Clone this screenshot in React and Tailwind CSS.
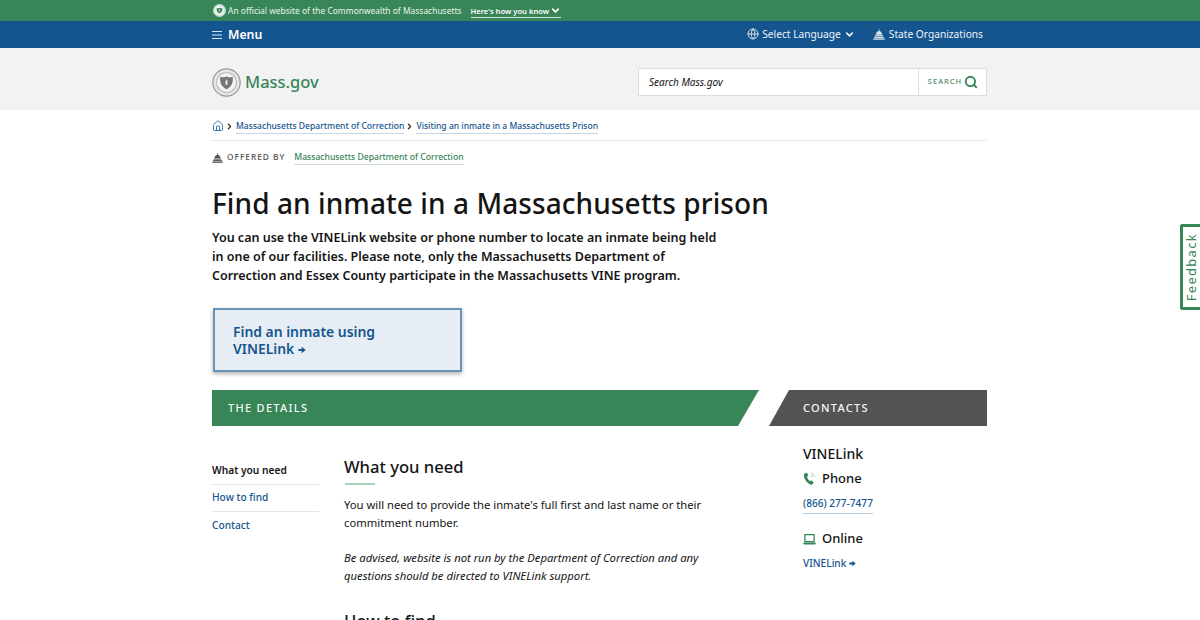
import React from 'react';
import { ChevronDown, Globe, Search, House, ChevronRight } from 'lucide-react';

// capitol building icon used for "State Organizations" and "Offered by"
function Capitol({ className }) {
  return (
    <svg viewBox="0 0 16 14" className={className} fill="currentColor">
      <rect x="7.4" y="0" width="1.2" height="2" />
      <path d="M3.6 7.2C4 4.2 6 2.2 8 2.2s4 2 4.4 5z" />
      <rect x="2.6" y="7.8" width="10.8" height="1.6" />
      <rect x="1.6" y="10" width="12.8" height="1.6" />
      <rect x="0.4" y="12.2" width="15.2" height="1.8" />
    </svg>
  );
}

function Seal({ className, ring = '#9a9a9a', fill = '#e8e8e8', shield = '#757575' }) {
  return (
    <svg viewBox="0 0 28 28" className={className}>
      <circle cx="14" cy="14" r="13.2" fill={fill} stroke={ring} strokeWidth="1.2" />
      <circle cx="14" cy="14" r="9.6" fill="#f3f3f3" stroke={ring} strokeWidth="1.4" strokeDasharray="1 1" />
      <path d="M8 8.5c2.4.8 4 .8 6-.6 2 1.4 3.6 1.4 6 .6 .6 6-1 9.6-6 12-5-2.4-6.6-6-6-12z" fill={shield} />
      <path d="M14 10.5l.9 2.4v3.2h-1.8v-3.2z" fill="#f3f3f3" />
    </svg>
  );
}

function SmallArrow({ className }) {
  return (
    <svg viewBox="0 0 10 10" className={className} fill="currentColor">
      <path d="M0.5 3.6h4.2V1L9.6 5 4.7 9V6.4H0.5z" />
    </svg>
  );
}

function PhoneWaves({ className }) {
  return (
    <svg viewBox="0 0 14 15" className={className}>
      <path d="M2.2 1.2L4.4.8l1.3 3-1.4 1.3c.5 2 1.6 3.6 3.3 4.8l1.6-1 2.3 2.5-1.4 1.8c-.6.6-1.4.7-2.2.3C4 11.6 1.6 8 .9 3.6c-.1-1 .3-2 1.3-2.4z" fill="#388557" />
      <path d="M8.5 3.8c.9.2 1.5.8 1.7 1.7M8.8 1.5c1.9.3 3.2 1.6 3.6 3.5" fill="none" stroke="#8dbaa0" strokeWidth="0.9" />
    </svg>
  );
}

function LaptopIcon({ className }) {
  return (
    <svg viewBox="0 0 14 12" className={className}>
      <rect x="2" y="0.7" width="10" height="7.6" fill="none" stroke="#388557" strokeWidth="1.4" />
      <path d="M0.3 9.2h13.4v1.4c0 .5-.4.9-.9.9H1.2c-.5 0-.9-.4-.9-.9z" fill="#388557" />
    </svg>
  );
}

function TopBanner() {
  return (
    <div className="h-[21px] bg-[#388557] text-white">
      <div className="w-[775px] ml-[212px] h-full flex items-center">
        <Seal className="w-[13px] h-[13px] ml-[1px] mr-[2px]" ring="#dfeee5" fill="#cfe3d7" shield="#388557" />
        <span className="text-[8.45px] leading-none text-[#eaf3ed] mt-[1px]">An official website of the Commonwealth of Massachusetts</span>
        <span className="ml-[9px] mt-[1px] flex items-center text-[7.6px] font-semibold leading-[12px] border-b border-[#cfe6d8]">
          Here's how you know
          <ChevronDown className="w-[11px] h-[11px] ml-[1px]" strokeWidth={3.5} />
        </span>
      </div>
    </div>
  );
}

function NavBar() {
  return (
    <div className="h-[27px] bg-[#14558f] text-white">
      <div className="w-[775px] ml-[212px] h-full flex items-center justify-between">
        <div className="flex items-center">
          <svg viewBox="0 0 10 8" className="w-[10px] h-[8px] text-[#d9e6f2]" stroke="currentColor" strokeWidth="1">
            <path d="M0 .5h10M0 4h10M0 7.5h10" />
          </svg>
          <span className="ml-[6px] mt-[1px] text-[12.3px] font-semibold">Menu</span>
        </div>
        <div className="flex items-center text-[10.2px] text-[#eef3f8] mr-[4px]">
          <Globe className="w-[12px] h-[12px] text-[#d5e1ec]" strokeWidth={2} />
          <span className="ml-[3px]">Select Language</span>
          <ChevronDown className="w-[11px] h-[11px] ml-[3px]" strokeWidth={3.5} />
          <Capitol className="w-[12px] h-[11px] ml-[18px] text-[#d5e1ec]" />
          <span className="ml-[4px]">State Organizations</span>
        </div>
      </div>
    </div>
  );
}

function SiteHeader() {
  return (
    <div className="h-[62px] bg-[#f2f2f2] pt-[6px]">
      <div className="w-[775px] ml-[212px] h-full flex items-center justify-between">
        <div className="flex items-center">
          <Seal className="w-[29px] h-[29px]" />
          <span className="ml-[4px] text-[16.5px] font-medium text-[#388557]">Mass.gov</span>
        </div>
        <div className="flex w-[349px] h-[28px] border border-[#dcdcdc] bg-white">
          <div className="flex-1 flex items-center pl-[10px] text-[10px] italic text-[#141414]">Search Mass.gov</div>
          <div className="w-[68px] border-l border-[#dcdcdc] flex items-center justify-center pl-[1px] text-[#388557]">
            <span className="text-[7.5px] font-medium tracking-[1px] text-[#4f8b69]">SEARCH</span>
            <Search className="w-[14px] h-[14px] ml-[2px]" strokeWidth={3.2} />
          </div>
        </div>
      </div>
    </div>
  );
}

function Crumbs() {
  return (
    <div className="h-[31px] pt-[7px] flex items-start border-b border-[#e5e5e5] text-[8.55px] font-medium text-[#14558f]">
      <House className="w-[12px] h-[12px] mt-[3px]" strokeWidth={1.6} />
      <ChevronRight className="w-[9px] h-[9px] mt-[4.5px] ml-[1px] text-[#333]" strokeWidth={3.5} />
      <span className="ml-[2px] leading-[14px] mt-[2px] border-b border-[#c5d5e4]">Massachusetts Department of Correction</span>
      <ChevronRight className="w-[9px] h-[9px] mt-[4.5px] ml-[1px] text-[#333]" strokeWidth={3.5} />
      <span className="ml-[2px] leading-[14px] mt-[2px] border-b border-[#c5d5e4]">Visiting an inmate in a Massachusetts Prison</span>
    </div>
  );
}

function Hero() {
  return (
    <div>
      <div className="flex items-center h-[32px] pt-[1px]">
        <Capitol className="w-[11px] h-[10px] text-[#535353]" />
        <span className="ml-[4px] text-[8.3px] font-medium tracking-[1px] text-[#535353]">OFFERED BY</span>
        <span className="ml-[9px] text-[8.6px] font-medium text-[#388557] leading-[13px] border-b border-[#cde0d5]">Massachusetts Department of Correction</span>
      </div>
      <h1 className="mt-[10px] text-[28px] leading-[40px] font-medium text-[#141414] tracking-[0.08px]">Find an inmate in a Massachusetts prison</h1>
      <p className="mt-[5px] w-[515px] text-[12.5px] leading-[19px] font-semibold text-[#141414]">
        You can use the VINELink website or phone number to locate an inmate being held in one of our facilities. Please note, only the Massachusetts Department of Correction and Essex County participate in the Massachusetts VINE program.
      </p>
      <div className="mt-[23px] w-[249px] h-[64px] ml-[1px] border-2 border-[#6b93b8] bg-[#e7edf4] shadow-[0_2px_4px_rgba(0,0,0,0.3)] pl-[18px] pt-[13px] text-[13.9px] leading-[17px] font-semibold text-[#14558f]">
        Find an inmate using<br />
        VINELink <SmallArrow className="inline w-[8px] h-[8px] align-[0px]" />
      </div>
    </div>
  );
}

function Bands() {
  return (
    <div className="mt-[18px] flex h-[36px] text-[11px] font-medium tracking-[1.3px] text-[#f4f8f5]">
      <div className="w-[547px] bg-[#388557] flex items-center pl-[16px] pt-[1px] [clip-path:polygon(0_0,100%_0,526px_100%,0_100%)]">THE DETAILS</div>
      <div className="ml-[10px] w-[218px] bg-[#535353] flex items-center pl-[34px] pt-[1px] [clip-path:polygon(20px_0,100%_0,100%_100%,0_100%)]">CONTACTS</div>
    </div>
  );
}

function Details() {
  return (
    <div className="flex">
      <div className="w-[107px] pt-[30px] text-[10.2px] font-medium">
        <div className="h-[29px] leading-[29px] border-b border-[#e5e5e5] font-semibold text-[#141414]">What you need</div>
        <div className="h-[27px] leading-[25px] border-b border-[#e5e5e5] text-[#14558f]">How to find</div>
        <div className="h-[27px] leading-[27px] text-[#14558f]">Contact</div>
      </div>
      <div className="ml-[25px] w-[400px] pt-[28px] text-[#141414]">
        <h2 className="text-[16.6px] leading-[26px] font-medium">What you need</h2>
        <div className="mt-[3px] ml-[1px] w-[30px] h-[2px] bg-[#a9cfb8]"></div>
        <p className="mt-[11px] text-[11.25px] leading-[18px] w-[370px]">You will need to provide the inmate's full first and last name or their commitment number.</p>
        <p className="mt-[17px] text-[11.25px] leading-[18px] italic w-[370px]">Be advised, website is not run by the Department of Correction and any questions should be directed to VINELink support.</p>
        <h2 className="mt-[23px] text-[16.6px] leading-[26px] font-medium">How to find</h2>
      </div>
      <div className="ml-[59px] pt-[18px] text-[#141414]">
        <div className="text-[14px] leading-[20px] font-medium">VINELink</div>
        <div className="mt-[5px] flex items-center h-[20px]">
          <PhoneWaves className="w-[13px] h-[14px]" />
          <span className="ml-[6px] text-[13px] font-medium">Phone</span>
        </div>
        <div className="mt-[5px] w-fit text-[10.1px] leading-[19px] font-medium text-[#14558f] border-b border-[#b9cde0]">(866) 277-7477</div>
        <div className="mt-[15px] flex items-center h-[20px]">
          <LaptopIcon className="w-[13px] h-[11px]" />
          <span className="ml-[6px] text-[13px] font-medium">Online</span>
        </div>
        <div className="mt-[5px] flex items-center text-[10.1px] leading-[18px] font-medium text-[#14558f]">
          VINELink <SmallArrow className="w-[7px] h-[7px] ml-[3px]" />
        </div>
      </div>
    </div>
  );
}

export default function App() {
  return (
    <div className="relative h-[620px] overflow-hidden bg-white font-['Noto_Sans','Open_Sans',sans-serif]">
      <TopBanner />
      <NavBar />
      <SiteHeader />
      <div className="w-[775px] ml-[212px]">
        <Crumbs />
        <Hero />
        <Bands />
        <Details />
      </div>
      <div className="absolute right-0 top-[224px] w-[20px] h-[86px] border-[3px] border-r-0 border-[#388557] rounded-l-[3px] bg-white flex items-center justify-center">
        <span className="[writing-mode:vertical-rl] rotate-180 text-[13px] tracking-[1.3px] text-[#388557]">Feedback</span>
      </div>
    </div>
  );
}
